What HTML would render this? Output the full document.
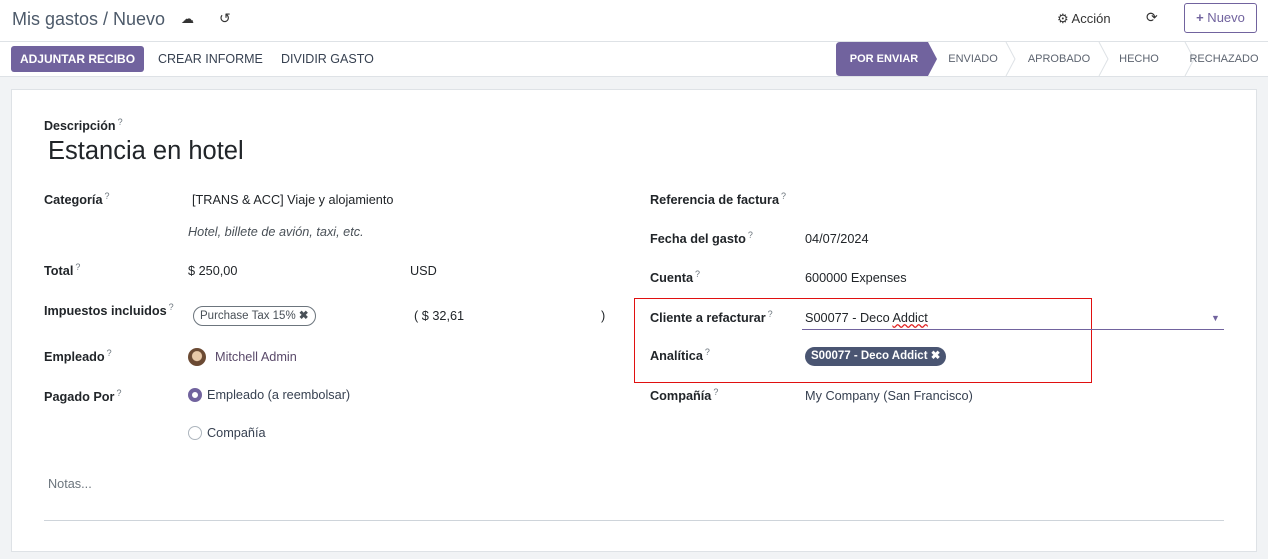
<!DOCTYPE html>
<html><head><meta charset="utf-8"><style>
*{box-sizing:border-box;margin:0;padding:0}
body{width:1268px;height:559px;background:#f1f3f5;font-family:"Liberation Sans",sans-serif;font-size:12.7px;color:#212529;position:relative;overflow:hidden}
.a{position:absolute;white-space:nowrap}
.top{position:absolute;left:0;top:0;width:1268px;height:77px;background:#fff;border-bottom:1px solid #dee2e6}
.sep{position:absolute;left:0;top:41px;width:1268px;height:1px;background:#dee2e6}
.card{position:absolute;left:11px;top:89px;width:1246px;height:463px;background:#fff;border:1px solid #dee2e6}
.lbl{font-weight:bold;color:#212529}
sup{font-size:9px;color:#6c757d;font-weight:normal;margin-left:2px}
.st{position:absolute;top:43px;height:33px;line-height:33px;font-size:11px;color:#5d6470;text-align:center}
</style></head><body>
<div class="top"></div><div class="sep"></div>
<div class="a" style="left:12px;top:9px;font-size:18px;color:#4d5a6a">Mis gastos / Nuevo</div>
<div class="a" style="left:181px;top:11px;font-size:13px;color:#333">☁</div>
<div class="a" style="left:219px;top:10px;font-size:14px;color:#333">↺</div>
<div class="a" style="left:1057px;top:11px;font-size:13px;color:#333">⚙ Acción</div>
<div class="a" style="left:1146px;top:9px;font-size:14px;color:#333">⟳</div>
<div class="a" style="left:1184px;top:3px;width:73px;height:30px;border:1px solid #71639e;border-radius:3px;color:#71639e;line-height:28px;text-align:center;font-size:13px"><b>+</b> Nuevo</div>
<div class="a" style="left:11px;top:46px;width:133px;height:26px;background:#71639e;border-radius:3px;color:#fff;font-weight:bold;font-size:12px;line-height:26px;text-align:center">ADJUNTAR RECIBO</div>
<div class="a" style="left:158px;top:52px;font-size:12.5px;color:#374151">CREAR INFORME</div>
<div class="a" style="left:281px;top:52px;font-size:12.5px;color:#374151">DIVIDIR GASTO</div>
<svg class="a" style="left:836px;top:42px" width="432" height="34">
<path d="M4 0H92L101 17L92 34H4Q0 34 0 30V4Q0 0 4 0Z" fill="#71639e"/>
<path d="M170 0L179 17L170 34M263 0L272 17L263 34M349 0L358 17L349 34" stroke="#dee2e6" fill="none"/>
</svg>
<div class="st" style="left:836px;width:96px;color:#fff;font-weight:bold">POR ENVIAR</div>
<div class="st" style="left:945px;width:56px">ENVIADO</div>
<div class="st" style="left:1026px;width:66px">APROBADO</div>
<div class="st" style="left:1118px;width:42px">HECHO</div>
<div class="st" style="left:1188px;width:72px">RECHAZADO</div>
<div class="card"></div>
<div class="a lbl" style="left:44px;top:117px;font-size:12.5px">Descripción<sup>?</sup></div>
<div class="a" style="left:48px;top:137px;font-size:25.5px">Estancia en hotel</div>
<div class="a lbl" style="left:44px;top:191px">Categoría<sup>?</sup></div>
<div class="a" style="left:192px;top:193px">[TRANS &amp; ACC] Viaje y alojamiento</div>
<div class="a" style="left:188px;top:225px;font-style:italic;color:#495057">Hotel, billete de avión, taxi, etc.</div>
<div class="a lbl" style="left:44px;top:262px">Total<sup>?</sup></div>
<div class="a" style="left:188px;top:264px">$ 250,00</div>
<div class="a" style="left:410px;top:264px">USD</div>
<div class="a lbl" style="left:44px;top:302px">Impuestos incluidos<sup>?</sup></div>
<div class="a" style="left:193px;top:306px;height:20px;padding:0 6px;border:1px solid #6c757d;border-radius:10px;line-height:18px;font-size:11.5px;color:#495057">Purchase Tax 15% <b>✖</b></div>
<div class="a" style="left:414px;top:309px">( $ 32,61</div>
<div class="a" style="left:601px;top:309px">)</div>
<div class="a lbl" style="left:44px;top:348px">Empleado<sup>?</sup></div>
<div class="a" style="left:188px;top:348px;width:18px;height:18px;border-radius:50%;background:radial-gradient(circle at 50% 45%,#e8c9a8 35%,#6b4a33 40%)"></div>
<div class="a" style="left:215px;top:350px;color:#5a4a6a">Mitchell Admin</div>
<div class="a lbl" style="left:44px;top:388px">Pagado Por<sup>?</sup></div>
<div class="a" style="left:188px;top:388px;width:14px;height:14px;border-radius:50%;border:4px solid #71639e;background:#fff"></div>
<div class="a" style="left:207px;top:388px;color:#374151">Empleado (a reembolsar)</div>
<div class="a" style="left:188px;top:426px;width:14px;height:14px;border-radius:50%;border:1px solid #adb5bd;background:#fff"></div>
<div class="a" style="left:207px;top:426px;color:#374151">Compañía</div>
<div class="a" style="left:48px;top:477px;color:#6c757d">Notas...</div>
<div class="a" style="left:44px;top:520px;width:1180px;height:1px;background:#ced4da"></div>
<div class="a lbl" style="left:650px;top:191px">Referencia de factura<sup>?</sup></div>
<div class="a lbl" style="left:650px;top:230px">Fecha del gasto<sup>?</sup></div>
<div class="a" style="left:805px;top:232px">04/07/2024</div>
<div class="a lbl" style="left:650px;top:269px">Cuenta<sup>?</sup></div>
<div class="a" style="left:805px;top:271px">600000 Expenses</div>
<div class="a" style="left:634px;top:298px;width:458px;height:85px;border:1px solid #e01010"></div>
<div class="a lbl" style="left:650px;top:309px">Cliente a refacturar<sup>?</sup></div>
<div class="a" style="left:805px;top:311px">S00077 - Deco <span style="text-decoration:underline wavy #e02020">Addict</span></div>
<div class="a" style="left:802px;top:329px;width:422px;height:1px;background:#71639e"></div>
<div class="a" style="left:1211px;top:313px;font-size:9px;color:#71639e">▼</div>
<div class="a lbl" style="left:650px;top:347px">Analítica<sup>?</sup></div>
<div class="a" style="left:805px;top:347px;height:19px;padding:0 6px;background:#4a5572;border-radius:10px;line-height:19px;color:#fff;font-weight:bold;font-size:11.5px">S00077 - Deco Addict ✖</div>
<div class="a lbl" style="left:650px;top:387px">Compañía<sup>?</sup></div>
<div class="a" style="left:805px;top:389px;color:#374151">My Company (San Francisco)</div>
</body></html>
